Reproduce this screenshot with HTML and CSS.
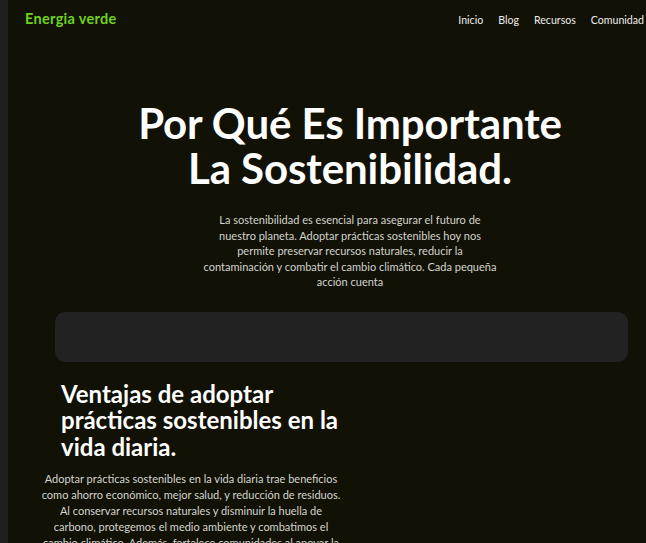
FILE: index.html
```html
<!DOCTYPE html>
<html lang="es">
<head>
<meta charset="utf-8">
<title>Energia verde</title>
<link rel="stylesheet" href="styles.css">
</head>
<body>
<div class="page">
  <header class="topbar">
    <div class="logo">Energia verde</div>
    <nav class="nav">
      <a href="#">Inicio</a>
      <a href="#">Blog</a>
      <a href="#">Recursos</a>
      <a href="#">Comunidad</a>
    </nav>
  </header>
  <section class="hero">
    <h1 class="hero-title">Por Qué Es Importante<br>La Sostenibilidad.</h1>
    <p class="hero-text">La sostenibilidad es esencial para asegurar el futuro de nuestro planeta. Adoptar prácticas sostenibles hoy nos permite preservar recursos naturales, reducir la contaminación y combatir el cambio climático. Cada pequeña acción cuenta</p>
  </section>
  <div class="card"></div>
  <section class="benefits">
    <h2 class="benefits-title">Ventajas de adoptar prácticas sostenibles en la vida diaria.</h2>
    <p class="benefits-text">Adoptar prácticas sostenibles en la vida diaria trae beneficios como ahorro económico, mejor salud, y reducción de residuos. Al conservar recursos naturales y disminuir la huella de carbono, protegemos el medio ambiente y combatimos el cambio climático. Además, fortalece comunidades al apoyar la economía local.</p>
  </section>
</div>
</body>
</html>
```
FILE: styles.css
```css
html, body {
  margin: 0;
  padding: 0;
}
body {
  background: #1f1f21;
  font-family: "Lato", "Noto Sans", sans-serif;
  overflow: hidden;
  height: 543px;
}
.page {
  margin-left: 8px;
  background: #111105;
  min-height: 543px;
  color: #ffffff;
}
.topbar {
  display: flex;
  justify-content: space-between;
  align-items: center;
  padding: 8px 0 0 17px;
  height: 20px;
}
.logo {
  color: #6fd11c;
  font-weight: 700;
  font-size: 14.5px;
  letter-spacing: 0.3px;
}
.nav {
  display: flex;
  gap: 15px;
  margin-right: 2px;
  padding-top: 3px;
}
.nav a {
  color: #ececec;
  text-decoration: none;
  font-size: 10.6px;
}
.hero {
  width: 684px;
  display: flex;
  flex-direction: column;
  align-items: center;
}
.hero-title {
  margin: 73px 0 0;
  font-size: 42px;
  line-height: 45px;
  font-weight: 700;
  text-align: center;
  letter-spacing: -0.1px;
}
.hero-text {
  margin: 21px 0 0;
  width: 294px;
  font-size: 11px;
  line-height: 15.5px;
  letter-spacing: 0;
  color: #d4d4d0;
  text-align: center;
}
.card {
  margin: 22px 0 0 47px;
  width: 573px;
  height: 50px;
  border-radius: 10px;
  background: #222222;
}
.benefits {
  width: 302px;
  margin: 19px 0 0 32px;
}
.benefits-title {
  margin: 0 0 0 21px;
  font-size: 24px;
  line-height: 26.5px;
  font-weight: 700;
  letter-spacing: 0;
}
.benefits-text {
  margin: 11px 0 0;
  font-size: 11px;
  line-height: 16px;
  color: #d4d4d0;
  text-align: center;
}
```
